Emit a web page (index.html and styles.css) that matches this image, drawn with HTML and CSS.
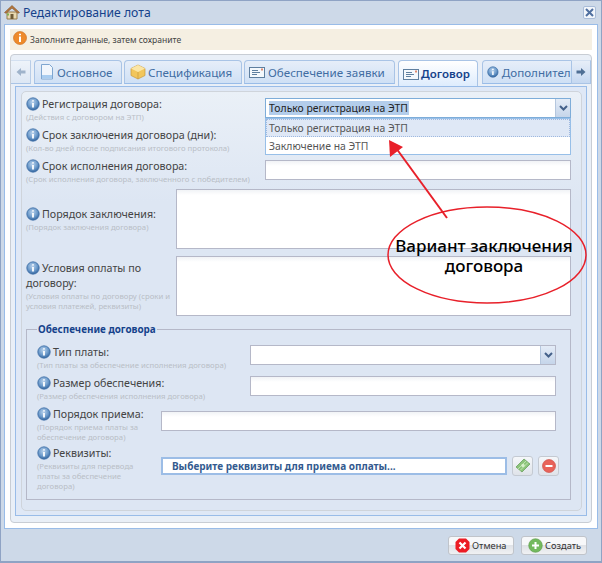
FILE: index.html
```html
<!DOCTYPE html>
<html lang="ru">
<head>
<meta charset="utf-8">
<title>Редактирование лота</title>
<link rel="stylesheet" href="styles.css">
</head>
<body>
<svg class="defs" width="0" height="0" aria-hidden="true">
  <defs>
    <radialGradient id="infoGrad" cx="45%" cy="35%" r="65%"><stop offset="0" stop-color="#b9d2ec"/><stop offset="0.6" stop-color="#6d9bcb"/><stop offset="1" stop-color="#33659f"/></radialGradient>
    <symbol id="info" viewBox="0 0 14 14"><circle cx="7" cy="7" r="6.2" fill="url(#infoGrad)" stroke="#3f6fa6" stroke-width="0.8"/><path d="M7 3.2v1.4M7 6v4.6" stroke="#fff" stroke-width="1.8" fill="none"/></symbol>
    <symbol id="card" viewBox="0 0 16 14"><rect x="0.5" y="2.5" width="15" height="10" fill="#f4f8fc" stroke="#5f7f9f"/><path d="M3 5.5h6M3 7.5h8M3 9.5h5" stroke="#5f7f9f"/><rect x="12" y="3.5" width="2" height="2" fill="#e08a70"/></symbol>
  </defs>
</svg>
<div class="window">
  <header class="titlebar">
    <svg class="title-icon" width="16" height="16" viewBox="0 0 16 16"><path d="M3 8h10v7H3z" fill="#e9d9b0" stroke="#9a7d4a"/><path d="M6.5 10h3v5h-3z" fill="#6f5a36"/><path d="M0.5 8.5 8 1.5l7.5 7-1.5 .8L8 4 2 9.3z" fill="#b5763c" stroke="#7d5228" stroke-width=".6"/><path d="M3 10.5h2" stroke="#7fb24f" stroke-width="2"/></svg>
    <span class="title-text">Редактирование лота</span>
    <button class="close" type="button" aria-label="Закрыть"><svg width="9" height="9" viewBox="0 0 9 9"><path d="M1 1l7 7M8 1 1 8" stroke="#4f6f9f" stroke-width="2"/></svg></button>
  </header>
  <main class="body">
    <div class="notice">
      <svg class="notice-icon" width="14" height="14" viewBox="0 0 14 14"><circle cx="7" cy="7" r="6.5" fill="#ee8a2c" stroke="#c9691a" stroke-width=".6"/><path d="M7 2.8v1.5M7 5.6v5.4" stroke="#fff" stroke-width="2"/></svg>
      <span>Заполните данные, затем сохраните</span>
    </div>
    <section class="tabpanel">
      <div class="tabstrip">
        <div class="scroller scroller-left"><svg width="10" height="10" viewBox="0 0 10 10"><path d="M0.5 5 5 1v2.5h4.5v3H5V9z" fill="#9fb3cb"/></svg></div>
        <div class="tabs">
          <div class="tab tab-main"><svg width="14" height="16" viewBox="0 0 14 16"><path d="M1.5 .5h8l3 3v11.500h-11z" fill="#f1f6fc" stroke="#7fa6d0"/><path d="M2 11h10v3.500h-10z" fill="#a9cdf0"/></svg>Основное</div>
          <div class="tab tab-spec"><svg width="16" height="16" viewBox="0 0 16 16"><path d="M8 1 15 4.500v7L8 15 1 11.500v-7z" fill="#f2c65c" stroke="#c79a3e" stroke-width=".7"/><path d="M1 4.500 8 8l7-3.500L8 1z" fill="#fbe6a6"/><path d="M8 8v7" stroke="#c79a3e" stroke-width=".7"/></svg>Спецификация</div>
          <div class="tab tab-sec"><svg width="16" height="14"><use href="#card"/></svg>Обеспечение заявки</div>
          <div class="tab tab-active"><svg width="16" height="14"><use href="#card"/></svg>Договор</div>
          <div class="tab tab-more"><svg width="14" height="14"><use href="#info"/></svg>Дополнительно</div>
        </div>
        <div class="scroller scroller-right"><svg width="10" height="10" viewBox="0 0 10 10"><path d="M9.500 5 5 1v2.500H.5v3H5V9z" fill="#4f6f95"/></svg></div>
      </div>
      <div class="tabbody">
        <form class="form">
          <div class="row row-select">
            <div class="label label-main"><p class="name"><svg width="14" height="14"><use href="#info"/></svg>Регистрация договора:</p><p class="hint">(Действия с договором на ЭТП)</p></div>
            <div class="combo combo-focus"><span class="combo-value"><span class="selected">Только регистрация на ЭТП</span></span><span class="trigger"><svg width="9" height="6" viewBox="0 0 9 6"><path d="M1 1l3.500 3.500L8 1" stroke="#44618a" stroke-width="2" fill="none"/></svg></span></div>
          </div>
          <div class="row row-select">
            <div class="label label-main"><p class="name"><svg width="14" height="14"><use href="#info"/></svg>Срок заключения договора (дни):</p><p class="hint">(Кол-во дней после подписания итогового протокола)</p></div>
            <div class="input"></div>
          </div>
          <div class="row row-select row-third">
            <div class="label label-main"><p class="name"><svg width="14" height="14"><use href="#info"/></svg>Срок исполнения договора:</p><p class="hint">(Срок исполнения договора, заключенного с победителем)</p></div>
            <div class="input"></div>
          </div>
          <div class="row row-area">
            <div class="label label-area"><p class="name"><svg width="14" height="14"><use href="#info"/></svg>Порядок заключения:</p><p class="hint">(Порядок заключения договора)</p></div>
            <div class="input area"></div>
          </div>
          <div class="row row-area">
            <div class="label label-area"><p class="name"><svg width="14" height="14"><use href="#info"/></svg>Условия оплаты по договору:</p><p class="hint">(Условия оплаты по договору (сроки и условия платежей, реквизиты)</p></div>
            <div class="input area"></div>
          </div>
          <fieldset class="group">
            <legend>Обеспечение договора</legend>
            <div class="row row-group">
              <div class="label label-group"><p class="name"><svg width="14" height="14"><use href="#info"/></svg>Тип платы:</p><p class="hint">(Тип платы за обеспечение исполнения договора)</p></div>
              <div class="combo"><span class="combo-value"></span><span class="trigger"><svg width="9" height="6" viewBox="0 0 9 6"><path d="M1 1l3.500 3.500L8 1" stroke="#44618a" stroke-width="2" fill="none"/></svg></span></div>
            </div>
            <div class="row row-group">
              <div class="label label-group"><p class="name"><svg width="14" height="14"><use href="#info"/></svg>Размер обеспечения:</p><p class="hint">(Размер обеспечения исполнения договора)</p></div>
              <div class="input"></div>
            </div>
            <div class="row row-order">
              <div class="label label-narrow"><p class="name"><svg width="14" height="14"><use href="#info"/></svg>Порядок приема:</p><p class="hint">(Порядок приема платы за обеспечение договора)</p></div>
              <div class="input"></div>
            </div>
            <div class="row row-bank">
              <div class="label label-narrow"><p class="name"><svg width="14" height="14"><use href="#info"/></svg>Реквизиты:</p><p class="hint">(Реквизиты для перевода платы за обеспечение договора)</p></div>
              <div class="pick">Выберите реквизиты для приема оплаты...</div>
              <button class="icon-btn" type="button" aria-label="Выбрать"><svg width="16" height="16" viewBox="0 0 16 16"><path d="M1 9 9 1l6 5-8 8z" fill="#8cc47a" stroke="#5f9a52" stroke-width=".7"/><path d="M3 11l8-8M5 12.500l8-8" stroke="#c4e6b4" stroke-width=".9"/><circle cx="8" cy="7.500" r="1.700" fill="#d6efc9"/></svg></button>
              <button class="icon-btn" type="button" aria-label="Удалить"><svg width="14" height="14" viewBox="0 0 14 14"><circle cx="7" cy="7" r="6.500" fill="#e8635a" stroke="#c9463e" stroke-width=".6"/><path d="M3.500 7h7" stroke="#fff" stroke-width="2"/></svg></button>
            </div>
          </fieldset>
        </form>
      </div>
    </section>
  </main>
  <footer class="footer">
    <button class="btn" type="button"><svg width="15" height="15" viewBox="0 0 15 15"><path d="M4 .5h7L14.500 4v7L11 14.500H4L.5 11V4z" fill="#ec1c24"/><path d="M4.500 4.500l6 6M10.500 4.500l-6 6" stroke="#fff" stroke-width="2.200"/></svg>Отмена</button>
    <button class="btn" type="button"><svg width="15" height="15" viewBox="0 0 15 15"><circle cx="7.500" cy="7.500" r="6.800" fill="#74b95e" stroke="#5a9a48" stroke-width=".6"/><path d="M7.500 4v7M4 7.500h7" stroke="#fff" stroke-width="2"/></svg>Создать</button>
  </footer>
</div>
<div class="dropdown">
  <div class="option option-active">Только регистрация на ЭТП</div>
  <div class="option">Заключение на ЭТП</div>
</div>
<svg class="annotation" width="602" height="563" viewBox="0 0 602 563" aria-hidden="true">
  <ellipse cx="487" cy="255" rx="99" ry="48" fill="#fff" fill-opacity="0" stroke="#e8202a" stroke-width="1.500"/>
  <path d="M447 218 396 148" stroke="#e8202a" stroke-width="2"/>
  <path d="M389 140 390 157 403 147z" fill="#e8202a"/>
</svg>
<div class="callout">Вариант заключения<br>договора</div>
</body>
</html>
```
FILE: styles.css
```css
* { box-sizing: border-box; }
html, body { margin: 0; padding: 0; }
body { width: 602px; height: 563px; overflow: hidden; position: relative; font-family: "Noto Sans", sans-serif; font-size: 11px; color: #333; background: #fff; }
p { margin: 0; }
.defs { position: absolute; }
.window { width: 602px; height: 563px; background: #cdd9e8; border: 1px solid #8fa3c4; border-bottom-width: 2px; padding: 0 3px; display: flex; flex-direction: column; }
.titlebar { height: 22px; margin-bottom: 1px; display: flex; align-items: center; flex: none; }
.title-icon { margin-right: 3px; }
.title-text { font-size: 12.200px; color: #15428b; flex: 1; }
.close { width: 13px; height: 13px; margin-right: 2px; padding: 0; border: 1px solid #a9bcd8; border-radius: 2px; background: #f2f6fb; display: flex; align-items: center; justify-content: center; }
.body { height: 505px; flex: none; background: #fff; border: 1px solid #99bce8; padding: 4px 5px; }
.notice { height: 21px; background: #f5efe2; display: flex; align-items: center; gap: 3px; font-size: 8.550px; color: #444; padding-left: 3px; }
.notice-icon { margin-top: -3px; }
.tabpanel { margin-top: 4px; height: 469px; background: #e9eff7; border: 1px solid #c8cdd4; border-radius: 4px; padding: 5px 4px 6px; display: flex; flex-direction: column; }
.tabstrip { height: 26px; flex: none; display: flex; position: relative; margin-right: -4px; margin-left: -4px; }
.scroller { width: 20px; flex: none; height: 24px; background: linear-gradient(#e7eef8, #c5d8f1); border: 1px solid #a9c4e6; border-top-color: #d3e0f1; display: flex; align-items: center; justify-content: center; }
.scroller-left { border-left: 0; border-right-color: #b8cde8; background: linear-gradient(#eef3fa, #dde7f4); }
.scroller-right { position: absolute; right: 0; top: 0; }
.tabs { display: flex; gap: 2px; padding-left: 3px; flex: 1; overflow: hidden; min-width: 0; }
.tab { height: 24px; flex: none; display: flex; align-items: center; gap: 3px; padding-left: 4px; font-size: 11.600px; color: #416da3; white-space: nowrap; background: linear-gradient(#e6eef9, #cfe0f5); border: 1px solid #a9c4e6; border-bottom-color: #99bce8; border-radius: 4px 4px 0 0; }
.tab-main { width: 88px; padding-left: 5px; }
.tab-spec { width: 118px; padding-left: 5px; gap: 2px; }
.tab-sec { width: 151px; }
.tab-active { width: 80px; height: 26px; gap: 2px; color: #15428b; background: linear-gradient(#fff, #deecfd); border-bottom: 0; font-size: 11.500px; font-weight: 600; margin-left: 1px; }
.tab-more { width: 110px; margin-left: 2px; }
.tabbody { flex: 1; border: 1px solid #99bce8; padding: 4px 4px 4px 5px; background: #dfe8f6; }
.form { height: 100%; background: linear-gradient(#eaf0f7, #dde6f3 110px); border: 1px solid #cfd4db; border-radius: 5px; padding: 5px 10px 0 4px; }
.row { display: flex; align-items: center; }
.row-select { height: 31px; align-items: flex-start; }
.row-select .input, .row-select .combo { margin-top: 1px; }
.row-third { height: 30px; }
.row-area { height: 60px; margin-bottom: 7px; }
.label { flex: none; }
.label-main { width: 239px; }
.label-area { width: 150px; }
.label-group { width: 213px; }
.label-narrow { width: 124px; padding-right: 14px; }
.name { font-size: 10.700px; line-height: 15px; color: #444; }
.name svg { vertical-align: -3px; margin-right: 2px; }
.hint { font-size: 7.750px; line-height: 10px; color: #b9bec6; }
.input { flex: 1; height: 20px; background: linear-gradient(#f1f3f6, #fff 5px); border: 1px solid #b5b8c8; }
.area { height: 60px; }
.combo { flex: 1; height: 20px; display: flex; border: 1px solid #b5b8c8; background: #fff; }
.combo-focus { border-color: #7eadd9; }
.combo-value { flex: 1; padding-left: 3px; font-size: 10.400px; line-height: 18px; }
.selected { background: #b3cdeb; color: #222; padding-right: 1px; }
.trigger { width: 15px; flex: none; background: linear-gradient(#e4ecf7, #c5d5ea); border-left: 1px solid #b5c7de; display: flex; align-items: center; justify-content: center; }
.group { margin: 3px 0 0; padding: 10px 14px 0 10px; height: 177px; width: 545px; border: 1px solid #b5b8c8; border-radius: 0; min-width: 0; }
.group legend { font-size: 9.900px; font-weight: 700; color: #15428b; padding: 0 1px; margin-left: 0; line-height: 12px; }
.row-group { height: 31px; align-items: flex-start; }
.row-order { height: 39px; align-items: flex-start; }
.row-order .input { margin-top: 4px; }
.row-bank { align-items: flex-start; }
.pick { width: 346px; height: 18px; flex: none; margin-top: 11px; background: #fff; border: 2px solid #9cbde6; font-size: 10px; font-weight: 700; color: #335a8f; padding-left: 9px; line-height: 14px; }
.icon-btn { width: 21px; height: 20px; flex: none; margin: 10px 0 0 5px; padding: 0; background: linear-gradient(#f5f7fa, #dfe3e9); border: 1px solid #c4cad2; border-radius: 3px; display: flex; align-items: center; justify-content: center; }
.footer { flex: 1; display: flex; justify-content: flex-end; gap: 7px; padding: 7px 11px 0 0; }
.btn { width: 66px; height: 19px; padding: 0 0 0 6px; display: flex; align-items: center; gap: 2px; font-family: "Noto Sans", sans-serif; font-size: 9.300px; color: #333; background: linear-gradient(#f7f8fa 50%, #dfe2e7 50%, #f0f1f3); border: 1px solid #c0c4ca; border-radius: 3px; }
.dropdown { position: absolute; left: 265px; top: 118px; width: 306px; height: 37px; background: #fff; border: 1px solid #97bfe8; }
.option { height: 18px; font-size: 10.400px; line-height: 16px; padding-left: 2px; color: #555; border: 1px solid transparent; }
.option-active { background: #dfe8f6; border: 1px dotted #9fb9e0; }
.annotation { position: absolute; left: 0; top: 0; pointer-events: none; }
.callout { position: absolute; left: 384px; top: 236px; width: 200px; text-align: center; font-family: "Noto Sans", sans-serif; font-weight: 500; font-size: 17px; line-height: 20px; color: #000; }
```
